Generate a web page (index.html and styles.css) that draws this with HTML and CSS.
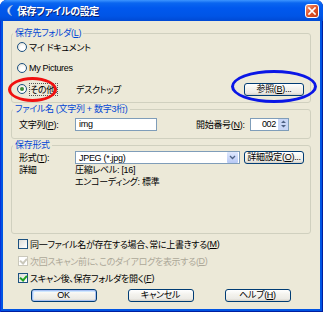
FILE: index.html
```html
<!DOCTYPE html>
<html lang="ja">
<head>
  <meta charset="UTF-8" />
  <title>保存ファイルの設定</title>
  <link rel="stylesheet" href="styles.css">
</head>
<body>
  <div class="window">
    <div class="titlebar">
      <svg class="app-icon" width="10" height="13" viewBox="0 0 10 13">
        <path d="M8.5 1.5 C3 2.5 1.5 9 7.5 11.5 C5 9 4.5 4.5 8.5 1.5Z" fill="#eef3fb" stroke="#8aa6d6" stroke-width="0.8"/>
      </svg>
      <span class="title">保存ファイルの設定</span>
      <span class="close">
        <svg width="14" height="14" viewBox="0 0 14 14">
          <path d="M4 4 L10 10 M10 4 L4 10" stroke="#fff" stroke-width="1.7" stroke-linecap="square"/>
        </svg>
      </span>
    </div>

    <div class="client">
      <fieldset class="group g-folder">
        <legend>保存先フォルダ(<u>L</u>)</legend>
        <div class="opt"><span class="radio"></span>マイ ドキュメント</div>
        <div class="opt"><span class="radio"></span>My Pictures</div>
        <div class="other-row">
          <div class="opt opt-other"><span class="radio checked"></span><span class="focus">その他:</span></div>
          <span class="path">デスクトップ</span>
          <button class="btn btn-side">参照(<u>B</u>)...</button>
        </div>
      </fieldset>

      <fieldset class="group g-name">
        <legend>ファイル名 (文字列 + 数字3桁)</legend>
        <div class="field-row">
          <span class="label">文字列(<u>P</u>):</span>
          <span class="edit edit-prefix">img</span>
          <span class="label label-start">開始番号(<u>N</u>):</span>
          <span class="edit edit-num">002
            <span class="spin">
              <svg width="7" height="10" viewBox="0 0 7 10">
                <path d="M1 4 L3.5 1.5 L6 4Z M1 6 L3.5 8.5 L6 6Z" fill="#4d6185"/>
              </svg>
            </span>
          </span>
        </div>
      </fieldset>

      <fieldset class="group g-format">
        <legend>保存形式</legend>
        <div class="field-row">
          <span class="label">形式(<u>T</u>):</span>
          <span class="edit select">JPEG (*.jpg)
            <span class="drop">
              <svg width="7" height="5" viewBox="0 0 7 5">
                <path d="M1 1 L3.5 3.5 L6 1" fill="none" stroke="#4d6185" stroke-width="1.3"/>
              </svg>
            </span>
          </span>
          <button class="btn btn-side">詳細設定(<u>O</u>)...</button>
        </div>
        <div class="detail-row">
          <span class="label">詳細</span>
          <div class="detail-text">
            <div>圧縮レベル: [16]</div>
            <div>エンコーディング: 標準</div>
          </div>
        </div>
      </fieldset>

      <div class="checks">
        <div class="check-row"><span class="checkbox"></span>同一ファイル名が存在する場合、常に上書きする(<u>M</u>)</div>
        <div class="check-row disabled"><span class="checkbox checked"></span>次回スキャン前に、このダイアログを表示する(<u>D</u>)</div>
        <div class="check-row"><span class="checkbox checked"></span>スキャン後、保存フォルダを開く(<u>F</u>)</div>
      </div>

      <div class="buttons">
        <button class="btn btn-main default">OK</button>
        <button class="btn btn-main">キャンセル</button>
        <button class="btn btn-main">ヘルプ(<u>H</u>)</button>
      </div>
    </div>

    <span class="mark mark-red"></span>
    <span class="mark mark-blue"></span>
  </div>
</body>
</html>
```

FILE: styles.css
```css
* {
  margin: 0; padding: 0; box-sizing: border-box;
}
html, body {
  width: 323px; height: 312px;
  overflow: hidden;
  background: #fff;
}
body {
  font-family: "Liberation Sans", "Noto Sans CJK JP", sans-serif;
  font-size: 9px;
  letter-spacing: -0.3px;
  font-feature-settings: "palt";
  color: #000;
}
u {
  text-decoration: underline;
  text-underline-offset: 1px;
}

.window {
  position: relative;
  width: 323px;
  height: 312px;
  display: flex;
  flex-direction: column;
  background: #0054e3;
  border-radius: 7px 7px 0 0;
  padding: 0 3px 3px;
  box-shadow: inset 1px 0 #0831d9, inset -1px 0 #001ea0, inset 0 -1px #001ea0;
}

/* title bar */
.titlebar {
  height: 21px;
  margin: 0 -3px;
  padding: 0 4px 0 4px;
  display: flex;
  align-items: center;
  border-radius: 7px 7px 0 0;
  background: linear-gradient(#3d95ff 0, #0a66f0 3px, #0058ee 8px, #0055e6 16px, #0049d4 21px);
  color: #fff;
}
.app-icon {
  flex: none;
}
.title {
  margin-left: 3px;
  font-size: 10px;
  font-weight: bold;
  letter-spacing: -0.4px;
  text-shadow: 1px 1px #0a1e6e;
}
.close {
  margin-left: auto;
  margin-top: 1px;
  width: 14px;
  height: 14px;
  border: 1px solid #fff;
  border-radius: 3px;
  background: linear-gradient(135deg, #f29b7a 0%, #e2572d 45%, #c43b14 100%);
  display: flex;
}
.close svg {
  margin: -1px;
}

/* client area */
.client {
  flex: 1;
  background: #ece9d8;
  padding: 6px 9px 0 8px;
  display: flex;
  flex-direction: column;
}

.group {
  border: 1px solid #d0d0bf;
  border-radius: 3px;
  padding: 0 6px 0 5px;
  min-width: 0;
}
.group legend {
  color: #0046d5;
  line-height: 12px;
  padding: 0 2px;
  margin-left: -4px;
}
.g-folder {
  padding-top: 1px;
  padding-bottom: 6px;
}
.g-name {
  padding-top: 2px;
  padding-bottom: 7px;
}
.g-format {
  padding-bottom: 45px;
}

/* radios */
.opt {
  height: 14px;
  display: flex;
  align-items: center;
  white-space: nowrap;
}
.opt + .opt, .opt + .other-row {
  margin-top: 7px;
}
.radio {
  width: 10px;
  height: 10px;
  margin-right: 2px;
  border: 1px solid #1c5180;
  border-radius: 50%;
  background: radial-gradient(circle at 60% 65%, #fff 30%, #dcd9cd 100%);
  flex: none;
  display: flex;
  align-items: center;
  justify-content: center;
}
.radio.checked::after {
  content: "";
  width: 4px;
  height: 4px;
  border-radius: 50%;
  background: #3f8d3a;
}
.other-row {
  height: 14px;
  display: flex;
  align-items: center;
}
.opt-other {
  width: 59px;
}
.focus {
  outline: 1px dotted #555;
  outline-offset: -1px;
  padding: 0 1px;
}
.path {
  flex: 1;
  white-space: nowrap;
}

/* buttons */
.btn {
  font: inherit;
  letter-spacing: inherit;
  color: #000;
  height: 13px;
  line-height: 11px;
  border: 1px solid #003c74;
  border-radius: 3px;
  background: linear-gradient(#ffffff 0%, #f4f3ee 40%, #ecebe6 80%, #d6d0c5 100%);
  display: flex;
  align-items: center;
  justify-content: center;
  white-space: nowrap;
}
.btn-side {
  width: 60px;
  flex: none;
}
.btn.default {
  box-shadow: inset 0 0 0 1px #a9c0f2, inset 1px 1px 0 1px #cee7ff;
}

/* text fields */
.field-row {
  height: 14px;
  display: flex;
  align-items: center;
  padding-left: 2px;
  white-space: nowrap;
}
.label {
  width: 56px;
  flex: none;
  white-space: nowrap;
}
.edit {
  height: 13px;
  border: 1px solid #7f9db9;
  background: #fff;
  display: flex;
  align-items: center;
  padding-left: 3px;
  flex: none;
}
.edit-prefix {
  width: 82px;
}
.label-start {
  margin-left: 39px;
  width: 54px;
}
.edit-num {
  width: 39px;
  justify-content: flex-end;
  padding: 0;
}
.spin {
  width: 10px;
  height: 11px;
  margin-left: 2px;
  background: #c8d6f6;
  display: flex;
  align-items: center;
  justify-content: center;
}
.select {
  width: 165px;
  padding-right: 1px;
}
.drop {
  margin-left: auto;
  width: 11px;
  height: 11px;
  background: linear-gradient(#dfe8fd, #b7c9f5);
  border-radius: 1px;
  display: flex;
  align-items: center;
  justify-content: center;
}
.g-format .btn-side {
  margin-left: 4px;
}
.g-format .field-row {
  height: 13px;
}
.detail-row {
  display: flex;
  padding-left: 2px;
  line-height: 12px;
  white-space: nowrap;
}

/* checkboxes */
.checks {
  margin-top: 4px;
  display: flex;
  flex-direction: column;
  gap: 5px;
}
.check-row {
  height: 12px;
  display: flex;
  align-items: center;
  padding-left: 7px;
  white-space: nowrap;
}
.checkbox {
  width: 10px;
  height: 10px;
  margin-right: 2px;
  border: 1px solid #1c5180;
  background: linear-gradient(135deg, #dcdcd7, #fff);
  flex: none;
  position: relative;
}
.checkbox.checked::after {
  content: "";
  position: absolute;
  left: 2px;
  top: 0;
  width: 3px;
  height: 5px;
  border: solid #21a121;
  border-width: 0 2px 2px 0;
  transform: rotate(40deg);
}
.check-row.disabled {
  color: #aca899;
}
.check-row.disabled .checkbox {
  border-color: #cac8bb;
  background: #fff;
}
.check-row.disabled .checkbox.checked::after {
  border-color: #cac8bb;
}

.buttons {
  margin-top: 5px;
  display: flex;
  justify-content: center;
  gap: 31px;
  padding-right: 1px;
}
.btn-main {
  width: 66px;
}

/* hand-drawn annotation rings */
.mark {
  position: absolute;
  border-radius: 50%;
  border: 3px solid;
  pointer-events: none;
}
.mark-red {
  left: 8px;
  top: 77px;
  width: 49px;
  height: 25px;
  border-color: #f01010;
}
.mark-blue {
  left: 231px;
  top: 70px;
  width: 86px;
  height: 33px;
  border-color: #0a16e6;
}
```
